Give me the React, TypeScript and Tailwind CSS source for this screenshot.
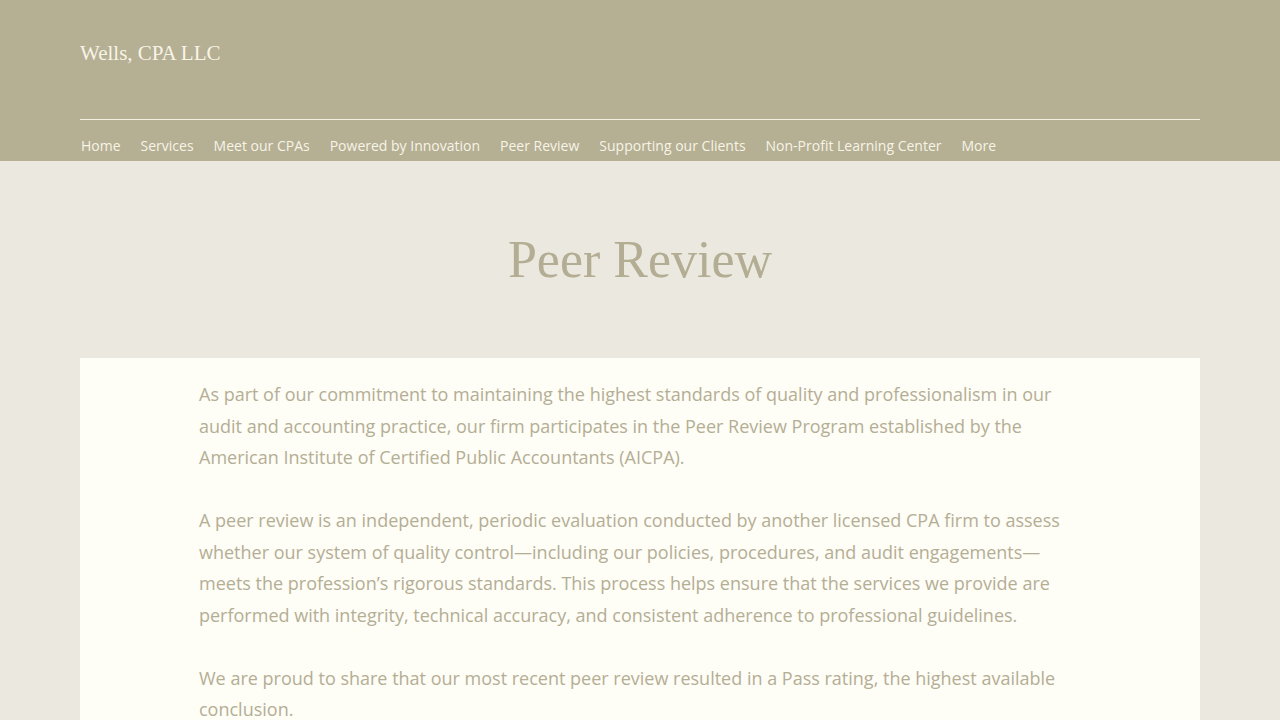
const nav = [
  "Home",
  "Services",
  "Meet our CPAs",
  "Powered by Innovation",
  "Peer Review",
  "Supporting our Clients",
  "Non-Profit Learning Center",
  "More",
];

export default function App() {
  return (
    <div className="min-h-[720px] bg-[#ebe9df] font-['Open_Sans',sans-serif]">
      <header className="bg-[#b5af94]">
        <div className="mx-auto w-[1120px]">
          <div className="h-[119px] pt-[38px]">
            <span className="font-['Liberation_Serif',serif] text-[21px] text-[#f7f4e6]">
              Wells, CPA LLC
            </span>
          </div>
          <div className="border-t border-[#f3f0e2]" />
          <nav className="flex h-[41px] items-center gap-5 pl-px pt-[9px] text-[14px] text-[#f7f4e6]">
            {nav.map((n) => (
              <span key={n}>{n}</span>
            ))}
          </nav>
        </div>
      </header>
      <main>
        <h1 className="pb-[61px] pt-[61px] text-center font-['Liberation_Serif',serif] text-[52px] leading-[75px] text-[#b3ad93]">
          Peer Review
        </h1>
        <div className="mx-auto w-[1120px] bg-[#fefdf6] pl-[119px] pr-[40px] pt-[21px] pb-10 text-[18px] leading-[31.5px] text-[#b4ae95]">
          <p>
            As part of our commitment to maintaining the highest standards of quality and professionalism in our
            <br />
            audit and accounting practice, our firm participates in the Peer Review Program established by the
            <br />
            American Institute of Certified Public Accountants (AICPA).
          </p>
          <p className="mt-[31.5px]">
            A peer review is an independent, periodic evaluation conducted by another licensed CPA firm to assess
            <br />
            whether our system of quality control—including our policies, procedures, and audit engagements—
            <br />
            meets the profession’s rigorous standards. This process helps ensure that the services we provide are
            <br />
            performed with integrity, technical accuracy, and consistent adherence to professional guidelines.
          </p>
          <p className="mt-[31.5px]">
            We are proud to share that our most recent peer review resulted in a Pass rating, the highest available
            <br />
            conclusion.
          </p>
        </div>
      </main>
    </div>
  );
}
